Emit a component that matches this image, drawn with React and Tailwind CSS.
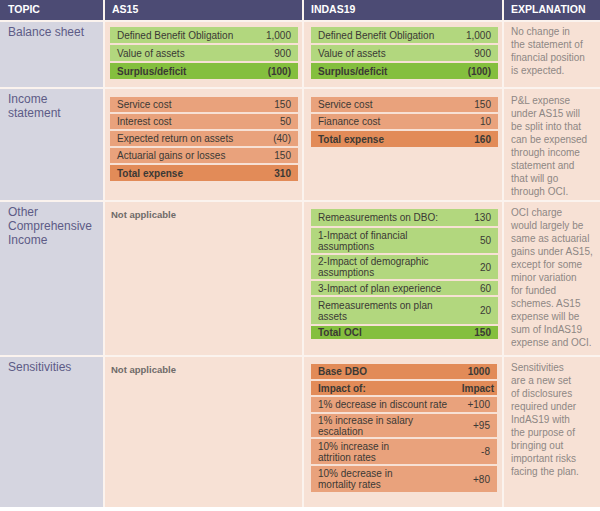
import React from 'react'

// colour palette for the comparison table
const GREEN = 'bg-[#b2d77e]'
const GREEN_DARK = 'bg-[#84bf3e]'
const ORANGE = 'bg-[#e9a27c]'
const ORANGE_DARK = 'bg-[#e28b58]'

function MiniTable({ rows, light, dark, gap }) {
    return (
        <div className={`flex flex-col gap-[2px] ${gap}`}>
            {rows.map((r, i) => (
                <div
                    key={i}
                    className={`flex items-center justify-between pl-[7px] ${r.pr || 'pr-[7px]'} ${r.h || 'h-[16px]'} ${r.strong ? dark : light} text-[10px] text-[#3b3935] ${r.strong ? 'font-bold' : ''}`}
                >
                    <span className="leading-[11px]">{r.label}</span>
                    <span className="leading-[11px]">{r.value}</span>
                </div>
            ))}
        </div>
    )
}

function Lines({ lines }) {
    return (
        <div className="pl-[7px] text-[10px] leading-[13px] text-[#8e8784] whitespace-nowrap">
            {lines.map((l, i) => (
                <div key={i}>{l}</div>
            ))}
        </div>
    )
}

function Topic({ children }) {
    return (
        <div className="bg-[#d5d5e0] pl-[8px] pt-[3px] text-[12px] leading-[14px] text-[#5d5b86]">
            {children}
        </div>
    )
}

function NotApplicable() {
    return (
        <div className="bg-[#f7e1d5] pl-[6px] pt-[6px] text-[9.5px] font-bold text-[#6f6b69]">
            Not applicable
        </div>
    )
}

export default function App() {
    const balance = [
        { label: 'Defined Benefit Obligation', value: '1,000' },
        { label: 'Value of assets', value: '900' },
        { label: 'Surplus/deficit', value: '(100)', strong: true },
    ]

    const incomeAs15 = [
        { label: 'Service cost', value: '150', h: 'h-[15px]' },
        { label: 'Interest cost', value: '50', h: 'h-[15px]' },
        { label: 'Expected return on assets', value: '(40)', h: 'h-[15px]' },
        { label: 'Actuarial gains or losses', value: '150', h: 'h-[15px]' },
        { label: 'Total expense', value: '310', strong: true, h: 'h-[16px]' },
    ]

    const incomeInd = [
        { label: 'Service cost', value: '150', h: 'h-[15px]' },
        { label: 'Fianance cost', value: '10', h: 'h-[15px]' },
        { label: 'Total expense', value: '160', strong: true, h: 'h-[16px]' },
    ]

    const oci = [
        { label: 'Remeasurements on DBO:', value: '130', h: 'h-[17px]' },
        { label: <>1-Impact of financial<br />assumptions</>, value: '50', h: 'h-[25px]' },
        { label: <>2-Impact of demographic<br />assumptions</>, value: '20', h: 'h-[24px]' },
        { label: '3-Impact of plan experience', value: '60', h: 'h-[14px]' },
        { label: <>Remeasurements on plan<br />assets</>, value: '20', h: 'h-[27px]' },
        { label: 'Total OCI', value: '150', strong: true, h: 'h-[13px]' },
    ]

    const sens = [
        { label: 'Base DBO', value: '1000', strong: true, h: 'h-[15px]' },
        { label: 'Impact of:', value: 'Impact', strong: true, h: 'h-[14px]', pr: 'pr-[3px]' },
        { label: '1% decrease in discount rate', value: '+100', h: 'h-[15px]' },
        { label: <>1% increase in salary<br />escalation</>, value: '+95', h: 'h-[23px]' },
        { label: <>10% increase in<br />attrition rates</>, value: '-8', h: 'h-[25px]' },
        { label: <>10% decrease in<br />mortality rates</>, value: '+80', h: 'h-[26px]' },
    ]

    return (
        <div className="w-[600px] h-[511px] bg-white" style={{ fontFamily: '"Liberation Sans", Arial, sans-serif' }}>
            <div className="grid grid-cols-[103px_197px_198px_96px] grid-rows-[20px_65px_111px_153px_150px] gap-[2px] bg-[#fbf3ee]">
                {/* header */}
                <div className="bg-[#4c4b74] pl-[8px] flex items-center text-[10.5px] font-extrabold text-white">TOPIC</div>
                <div className="bg-[#4c4b74] pl-[7px] flex items-center text-[10.5px] font-extrabold text-white">AS15</div>
                <div className="bg-[#4c4b74] pl-[7px] flex items-center text-[10.5px] font-extrabold text-white">INDAS19</div>
                <div className="bg-[#4c4b74] pl-[7px] flex items-center text-[10.5px] font-extrabold text-white">EXPLANATION</div>

                {/* balance sheet */}
                <Topic>Balance sheet</Topic>
                <div className="bg-[#f7e1d5] pl-[5px] pr-[4px] pt-[5px]">
                    <MiniTable rows={balance} light={GREEN} dark={GREEN_DARK} />
                </div>
                <div className="bg-[#f7e1d5] pl-[7px] pr-[4px] pt-[5px]">
                    <MiniTable rows={balance} light={GREEN} dark={GREEN_DARK} />
                </div>
                <div className="bg-[#f7e1d5] pt-[3px]">
                    <Lines lines={['No change in', 'the statement of', 'financial position', 'is expected.']} />
                </div>

                {/* income statement */}
                <Topic>Income<br />statement</Topic>
                <div className="bg-[#f7e1d5] pl-[5px] pr-[4px] pt-[8px]">
                    <MiniTable rows={incomeAs15} light={ORANGE} dark={ORANGE_DARK} />
                </div>
                <div className="bg-[#f7e1d5] pl-[7px] pr-[4px] pt-[8px]">
                    <MiniTable rows={incomeInd} light={ORANGE} dark={ORANGE_DARK} />
                </div>
                <div className="bg-[#f7e1d5] pt-[5px]">
                    <Lines lines={['P&L expense', 'under AS15 will', 'be split into that', 'can be expensed', 'through income', 'statement and', 'that will go', 'through OCI.']} />
                </div>

                {/* other comprehensive income */}
                <Topic>Other<br />Comprehensive<br />Income</Topic>
                <NotApplicable />
                <div className="bg-[#f7e1d5] pl-[7px] pr-[4px] pt-[7px]">
                    <MiniTable rows={oci} light={GREEN} dark={GREEN_DARK} />
                </div>
                <div className="bg-[#f7e1d5] pt-[4px]">
                    <Lines lines={['OCI charge', 'would largely be', 'same as actuarial', 'gains under AS15,', 'except for some', 'minor variation', 'for funded', 'schemes. AS15', 'expense will be', 'sum of IndAS19', 'expense and OCI.']} />
                </div>

                {/* sensitivities */}
                <Topic>Sensitivities</Topic>
                <NotApplicable />
                <div className="bg-[#f7e1d5] pl-[7px] pr-[5px] pt-[7px]">
                    <MiniTable rows={sens} light={ORANGE} dark={ORANGE_DARK} />
                </div>
                <div className="bg-[#f7e1d5] pt-[4px]">
                    <Lines lines={['Sensitivities', 'are a new set', 'of disclosures', 'required under', 'IndAS19 with', 'the purpose of', 'bringing out', 'important risks', 'facing the plan.']} />
                </div>
            </div>
        </div>
    )
}
